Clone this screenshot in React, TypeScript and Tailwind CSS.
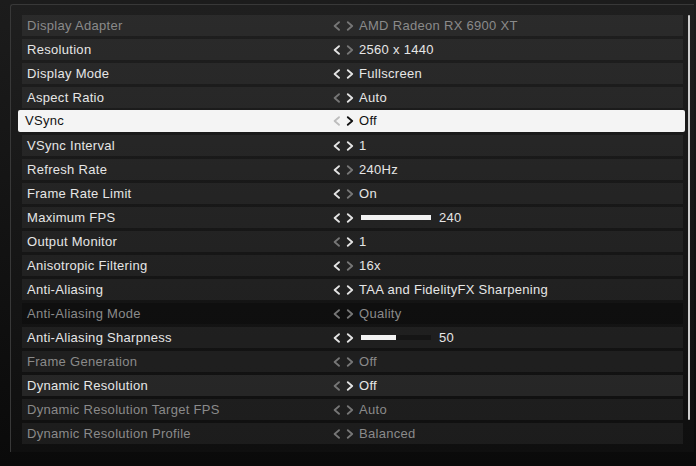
import React from 'react';

type Arrow = 'on' | 'off';

interface Row {
  label: string;
  value: string;
  dim?: boolean;
  left: Arrow;
  right: Arrow;
  slider?: number;
  selected?: boolean;
  tone?: 'dark' | 'light';
}

const rows: Row[] = [
  { label: 'Display Adapter', value: 'AMD Radeon RX 6900 XT', dim: true, left: 'off', right: 'off' },
  { label: 'Resolution', value: '2560 x 1440', left: 'on', right: 'off' },
  { label: 'Display Mode', value: 'Fullscreen', left: 'on', right: 'on' },
  { label: 'Aspect Ratio', value: 'Auto', left: 'off', right: 'on' },
  { label: 'VSync', value: 'Off', left: 'off', right: 'on', selected: true },
  { label: 'VSync Interval', value: '1', left: 'on', right: 'on' },
  { label: 'Refresh Rate', value: '240Hz', left: 'on', right: 'off' },
  { label: 'Frame Rate Limit', value: 'On', left: 'on', right: 'off' },
  { label: 'Maximum FPS', value: '240', left: 'on', right: 'on', slider: 100 },
  { label: 'Output Monitor', value: '1', left: 'off', right: 'on' },
  { label: 'Anisotropic Filtering', value: '16x', left: 'on', right: 'off' },
  { label: 'Anti-Aliasing', value: 'TAA and FidelityFX Sharpening', left: 'on', right: 'on' },
  { label: 'Anti-Aliasing Mode', value: 'Quality', dim: true, left: 'off', right: 'off', tone: 'dark' },
  { label: 'Anti-Aliasing Sharpness', value: '50', left: 'on', right: 'on', slider: 50 },
  { label: 'Frame Generation', value: 'Off', dim: true, left: 'off', right: 'off' },
  { label: 'Dynamic Resolution', value: 'Off', left: 'off', right: 'on', tone: 'light' },
  { label: 'Dynamic Resolution Target FPS', value: 'Auto', dim: true, left: 'off', right: 'off' },
  { label: 'Dynamic Resolution Profile', value: 'Balanced', dim: true, left: 'off', right: 'off' },
];

// the little < > pair in front of every value
const Arrows: React.FC<{ left: string; right: string }> = ({ left, right }) => (
  <svg width="21" height="10" viewBox="0 0 21 10" className="shrink-0">
    <path d="M6 1.2 L1.6 5 L6 8.8" fill="none" stroke={left} strokeWidth="1.8" strokeLinecap="round" strokeLinejoin="round" />
    <path d="M14.8 1.2 L19.2 5 L14.8 8.8" fill="none" stroke={right} strokeWidth="1.8" strokeLinecap="round" strokeLinejoin="round" />
  </svg>
);

const SettingRow: React.FC<{ row: Row }> = ({ row }) => {
  const white = '#e4e4e4';
  const grey = '#767676';

  if (row.selected) {
    return (
      <div className="flex items-center h-[22px] -mt-[1px] ml-[-4px] mr-[-2px] pl-[7px] bg-[#f4f4f4] rounded-[2px] text-[#111]">
        <span className="w-[308px] shrink-0">{row.label}</span>
        <Arrows left="#bdbdbd" right="#111111" />
        <span className="ml-[5px]">{row.value}</span>
      </div>
    );
  }

  const bg =
    row.tone === 'dark' ? 'bg-black/25' : row.tone === 'light' ? 'bg-white/[0.09]' : 'bg-white/[0.055]';
  const text = row.dim ? 'text-[#8a8a8a]' : 'text-[#e6e6e6]';

  return (
    <div className={`flex items-center h-[21px] pl-[5px] ${bg} ${text}`}>
      <span className="w-[306px] shrink-0">{row.label}</span>
      <Arrows left={row.left === 'on' ? white : grey} right={row.right === 'on' ? white : grey} />
      {row.slider !== undefined ? (
        <div className="flex items-center ml-[7px]">
          <div className="w-[70px] h-[5px] bg-black/30">
            <div className="h-full bg-[#f2f2f2]" style={{ width: `${row.slider}%` }} />
          </div>
          <span className="ml-[8px]">{row.value}</span>
        </div>
      ) : (
        <span className="ml-[5px]">{row.value}</span>
      )}
    </div>
  );
};

export default function App() {
  return (
    <div
      className="w-[696px] h-[466px] overflow-hidden bg-gradient-to-b from-[#1c1c1c] to-[#0a0a0a] pt-[4px] pl-[10px] text-[13px] tracking-[0.3px]"
      style={{ fontFamily: '"Liberation Sans", Arial, sans-serif' }}
    >
      <div className="w-[684px] h-[448px] border-l border-t border-[#383838] rounded-tl-[3px] bg-gradient-to-b from-[#1f1f1f] to-[#0f0f0f] pt-[10px] pl-[11px] flex">
        <div className="w-[661px] flex flex-col gap-[3px]">
          {rows.map((row) => (
            <SettingRow key={row.label} row={row} />
          ))}
        </div>
        <div className="ml-[5px] w-[2px] h-[405px] bg-[#cfcfcf] rounded-full" />
      </div>
    </div>
  );
}
